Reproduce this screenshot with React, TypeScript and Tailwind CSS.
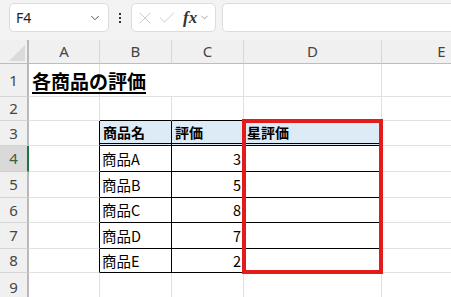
import { ChevronDown, X, Check } from "lucide-react";

const cols = ["A", "B", "C", "D", "E"];
const rowHeights = ["h-[33px]", "h-[24px]", "h-[25px]", "h-[26px]", "h-[26px]", "h-[25px]", "h-[26px]", "h-[24px]", "h-[30px]"];

const items = [
  { name: "商品A", score: 3 },
  { name: "商品B", score: 5 },
  { name: "商品C", score: 8 },
  { name: "商品D", score: 7 },
  { name: "商品E", score: 2 },
];

const jp = { fontFamily: '"Noto Sans CJK JP", "Noto Sans", sans-serif' };

function Cell({ className = "", children }: { className?: string; children?: React.ReactNode }) {
  return (
    <div className={`border-r border-b border-[#e1e1e1] flex items-center overflow-hidden whitespace-nowrap ${className}`}>
      {children}
    </div>
  );
}

function RowHead({ n, active = false }: { n: number; active?: boolean }) {
  return (
    <div
      className={`flex items-center justify-center border-b border-r-2 text-[15px] ${
        active
          ? "bg-[#d9d9d9] border-r-[#1e7145] border-b-[#d0d0d0] text-[#3b5e47]"
          : "bg-[#f0f0f0] border-r-[#b9b9b9] border-b-[#d4d4d4] text-[#444]"
      } ${rowHeights[n - 1]}`}
      style={{ fontFamily: '"Noto Sans", sans-serif' }}
    >
      {n}
    </div>
  );
}

export default function App() {
  return (
    <div className="w-[451px] h-[297px] overflow-hidden bg-white text-black" style={jp}>
      {/* formula bar */}
      <div className="h-[40px] bg-[#f3f3f3] flex items-start pt-[3px] pl-[9px]">
        <div className="w-[100px] h-[29px] bg-white border border-[#dcdcdc] rounded-[5px] flex items-center justify-between pl-[6px] pr-[6px]">
          <span className="text-[14px] text-[#222]" style={{ fontFamily: '"Noto Sans", sans-serif' }}>F4</span>
          <ChevronDown size={14} strokeWidth={1.5} className="text-[#444]" />
        </div>
        <div className="w-[22px] h-[29px] flex flex-col items-center justify-center gap-[2px]">
          <span className="w-[2px] h-[2px] bg-[#333]" />
          <span className="w-[2px] h-[2px] bg-[#333]" />
          <span className="w-[2px] h-[2px] bg-[#333]" />
        </div>
        <div className="w-[85px] h-[29px] bg-white border border-[#dcdcdc] rounded-[5px] flex items-center pl-[3px]">
          <X size={20} strokeWidth={1} className="text-[#c4c4c4]" />
          <Check size={20} strokeWidth={1} className="text-[#c4c4c4] ml-[2px]" />
          <span className="italic text-[17px] text-[#333] font-semibold ml-[6px]" style={{ fontFamily: '"Liberation Serif", serif' }}>fx</span>
          <ChevronDown size={11} strokeWidth={1.5} className="text-[#777] ml-[2px]" />
        </div>
        <div className="ml-[6px] flex-1 h-[29px] bg-white border border-[#dcdcdc] rounded-l-[5px] border-r-0" />
      </div>

      {/* grid */}
      <div className="grid grid-cols-[29px_71px_72px_72px_138px_120px] w-[502px]">
        {/* header row */}
        <div className="h-[24px] bg-[#f0f0f0] border-r-2 border-b border-r-[#b9b9b9] border-b-[#bdbdbd] relative">
          <div className="absolute right-[2px] bottom-[2px] w-0 h-0 border-l-[16px] border-l-transparent border-b-[16px] border-b-[#dadada]" />
        </div>
        {cols.map((c) => (
          <div
            key={c}
            className="h-[24px] bg-[#f0f0f0] border-r border-b border-r-[#d7d7d7] border-b-[#bdbdbd] flex items-center justify-center text-[15px] text-[#444]"
            style={{ fontFamily: '"Noto Sans", sans-serif' }}
          >
            {c}
          </div>
        ))}

        {/* row 1 */}
        <RowHead n={1} />
        <Cell className="h-[33px] overflow-visible relative">
          <span className="absolute left-[3px] top-[3px] text-[19px] font-bold underline underline-offset-[3px] decoration-[1.5px]">各商品の評価</span>
        </Cell>
        <Cell className="h-[33px] border-r-0" />
        <Cell className="h-[33px]" />
        <Cell className="h-[33px]" />
        <Cell className="h-[33px]" />

        {/* row 2 */}
        <RowHead n={2} />
        <Cell className="h-[24px]" />
        <Cell className="h-[24px] border-b-black" />
        <Cell className="h-[24px] border-b-black" />
        <Cell className="h-[24px] border-b-black" />
        <Cell className="h-[24px]" />

        {/* row 3 header */}
        <RowHead n={3} />
        <Cell className="h-[25px] border-r-black" />
        {["商品名", "評価", "星評価"].map((t, i) => (
          <div
            key={t}
            className="h-[25px] bg-[#ddebf7] border-r border-r-black border-b-[3px] border-b-black border-double flex items-center pl-[3px] text-[14px] font-bold relative"
          >
            {t}
            {i === 2 && (
              <div className="absolute -left-[2px] -top-[2px] w-[141px] h-[155px] border-4 border-[#e31b1b] pointer-events-none z-10" />
            )}
          </div>
        ))}
        <Cell className="h-[25px]" />

        {/* data rows */}
        {items.map((it, i) => {
          const h = rowHeights[i + 3];
          return [
            <RowHead key={`h${i}`} n={i + 4} active={i === 0} />,
            <Cell key={`a${i}`} className={`${h} border-r-black`} />,
            <Cell key={`b${i}`} className={`${h} border-r-black border-b-black pl-[2px] text-[14.5px]`}>
              {it.name}
            </Cell>,
            <Cell key={`c${i}`} className={`${h} border-r-black border-b-black justify-end pr-[2px] text-[14.5px]`}>
              {it.score}
            </Cell>,
            <Cell key={`d${i}`} className={`${h} border-r-black border-b-black`} />,
            <Cell key={`e${i}`} className={h} />,
          ];
        })}

        {/* row 9 */}
        <RowHead n={9} />
        <Cell className="h-[30px]" />
        <Cell className="h-[30px]" />
        <Cell className="h-[30px]" />
        <Cell className="h-[30px]" />
        <Cell className="h-[30px]" />
      </div>
    </div>
  );
}
